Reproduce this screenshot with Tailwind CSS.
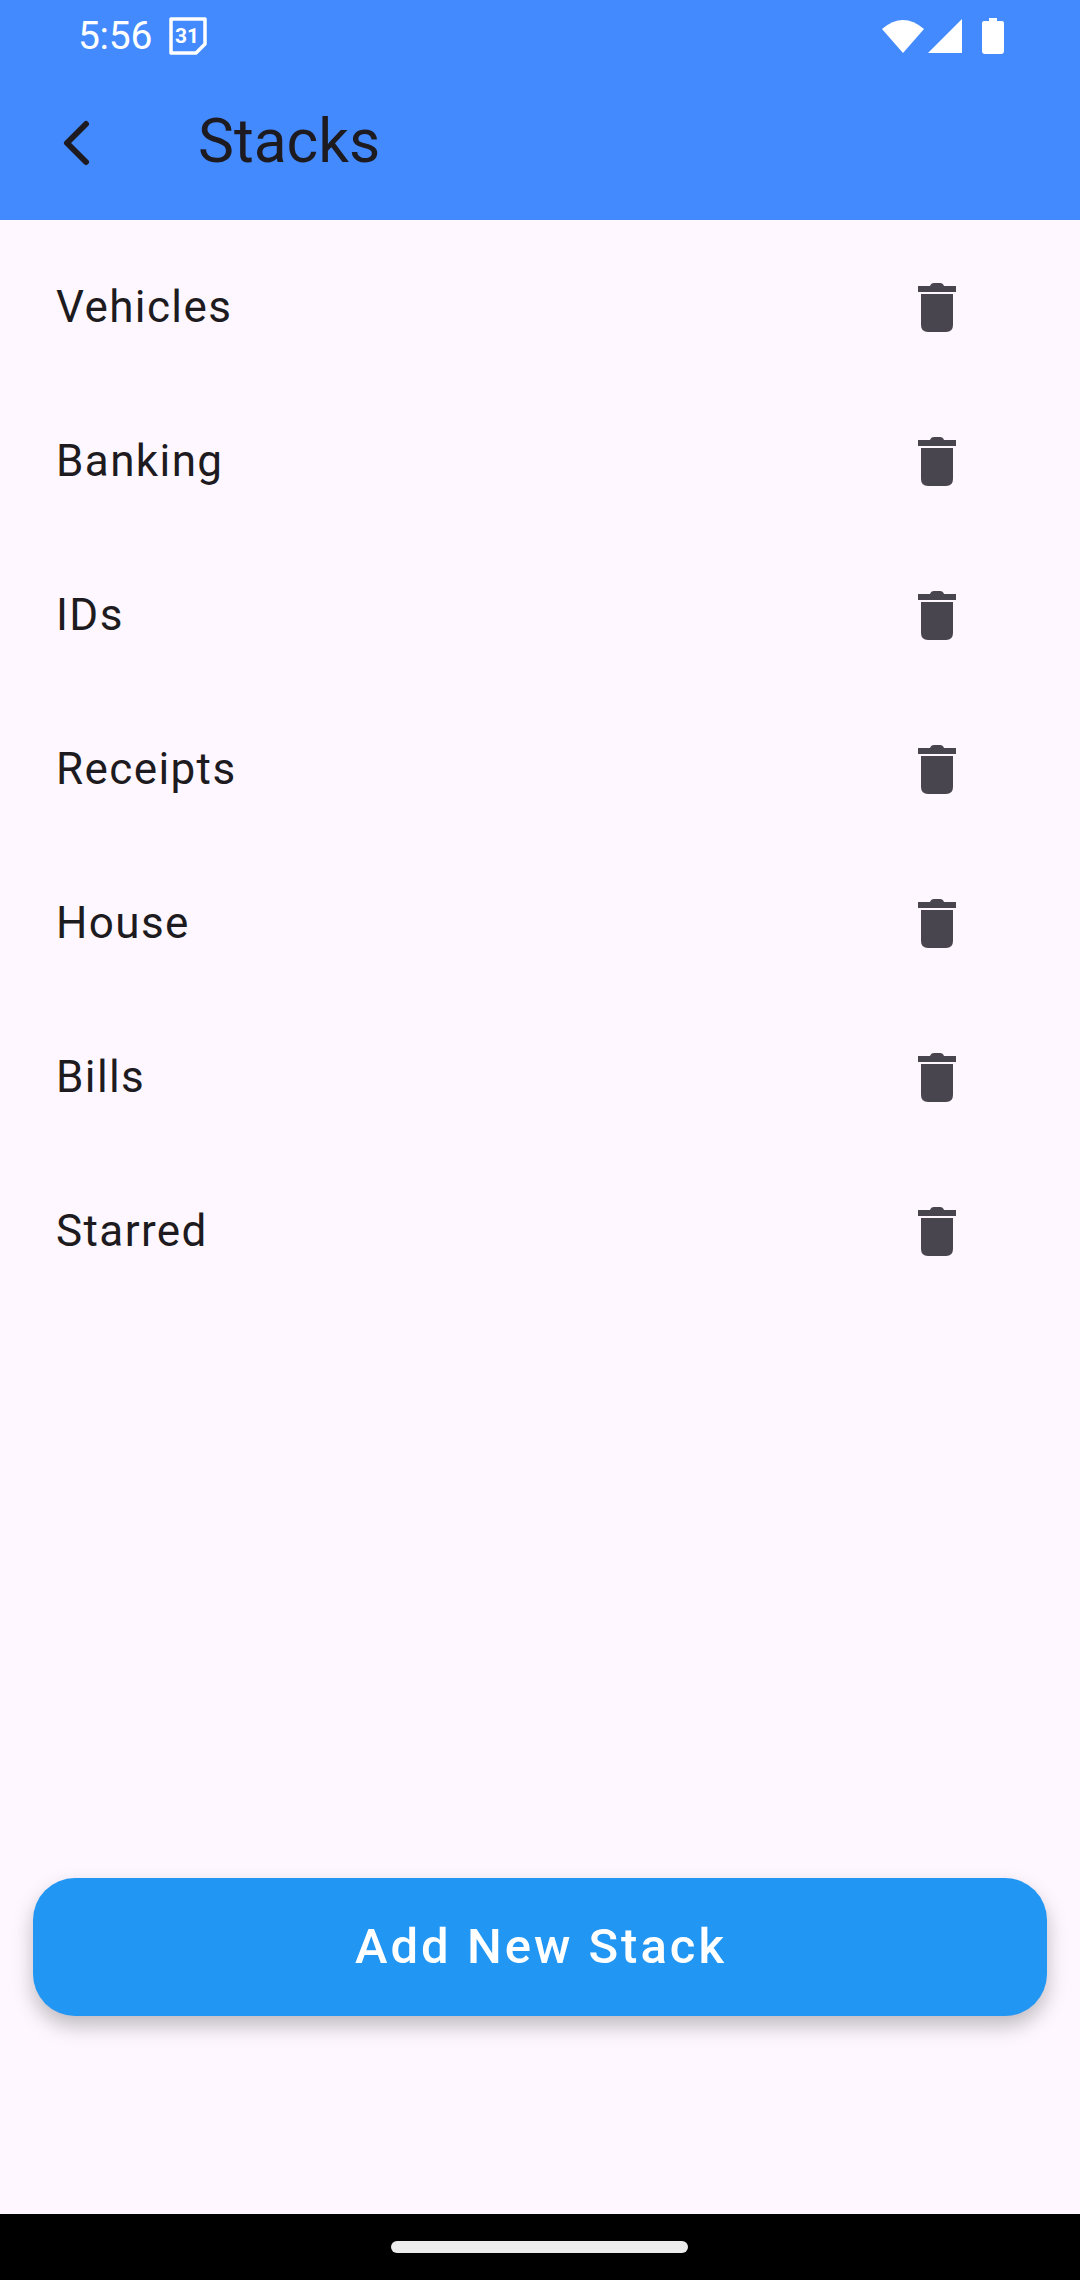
<!DOCTYPE html>
<html lang="en">
<head>
  <meta charset="UTF-8" />
  <title>Stacks</title>
  <script src="https://cdn.jsdelivr.net/npm/@tailwindcss/browser@4"></script>
</head>
<body class="bg-[#fef7ff] font-['Roboto',sans-serif]">
  <div class="w-[1080px] h-[2280px] flex flex-col overflow-hidden">

    <!-- status bar + app bar -->
    <header class="h-[220px] shrink-0 bg-[#448aff] flex flex-col">
      <div class="h-[72px] flex items-center justify-between pl-[78px] pr-[76px] text-white">
        <div class="flex items-center gap-[17px]">
          <span class="text-[39px] leading-none tracking-[-0.3px]">5:56</span>
          <svg class="w-[38px] h-[38px]" viewBox="0 0 38 38">
            <path d="M2 2H36V27L27 36H2Z" fill="none" stroke="#fff" stroke-width="3.5" stroke-linejoin="round"/>
            <text x="18" y="26" text-anchor="middle" font-family="Roboto" font-weight="700" font-size="21" fill="#fff">31</text>
          </svg>
        </div>
        <div class="flex items-center gap-[20px]">
          <div class="flex items-end gap-[4px]">
            <svg class="w-[42px] h-[36px]" viewBox="0 0 42 36"><path d="M0 11Q21 -7 42 11L21 35Z" fill="#fff"/></svg>
            <svg class="w-[34px] h-[35px]" viewBox="0 0 34 35"><path d="M34 0V34H0Z" fill="#fff"/></svg>
          </div>
          <svg class="w-[22px] h-[36px]" viewBox="0 0 22 36"><path d="M7 0H15V3H20Q22 3 22 5V33Q22 36 19 36H3Q0 36 0 33V5Q0 3 2 3H7Z" fill="#fff"/></svg>
        </div>
      </div>
      <div class="flex-1 flex items-center pb-[8px] text-[#1d1b20]">
        <div class="w-[198px] pl-[62px] pt-[2px] shrink-0">
          <svg class="w-[28px] h-[46px] block" viewBox="0 0 28 46"><path d="M24 4L5 23L24 42" fill="none" stroke="#1d1b20" stroke-width="6" stroke-linecap="round" stroke-linejoin="round"/></svg>
        </div>
        <h1 class="text-[60.5px] leading-none font-normal">Stacks</h1>
      </div>
    </header>

    <!-- stack list -->
    <main class="flex-1 relative">
      <ul class="pt-[9px] text-[#1d1b20]">
        <li class="h-[154px] flex items-center justify-between pl-[56px] pr-[124px]">
          <span class="text-[44px] tracking-[1.4px] mt-[1px]">Vehicles</span>
          <svg class="w-[38px] h-[49px] mt-[3px] text-[#49454f]" viewBox="0 0 38 49"><path fill="currentColor" d="M12 3Q13 0 16 0H22Q25 0 26 3H38V9H0V3ZM3 11H35V42Q35 49 28 49H10Q3 49 3 42Z"/></svg>
        </li>
        <li class="h-[154px] flex items-center justify-between pl-[56px] pr-[124px]">
          <span class="text-[44px] tracking-[1.4px] mt-[1px]">Banking</span>
          <svg class="w-[38px] h-[49px] mt-[3px] text-[#49454f]" viewBox="0 0 38 49"><path fill="currentColor" d="M12 3Q13 0 16 0H22Q25 0 26 3H38V9H0V3ZM3 11H35V42Q35 49 28 49H10Q3 49 3 42Z"/></svg>
        </li>
        <li class="h-[154px] flex items-center justify-between pl-[56px] pr-[124px]">
          <span class="text-[44px] tracking-[1.4px] mt-[1px]">IDs</span>
          <svg class="w-[38px] h-[49px] mt-[3px] text-[#49454f]" viewBox="0 0 38 49"><path fill="currentColor" d="M12 3Q13 0 16 0H22Q25 0 26 3H38V9H0V3ZM3 11H35V42Q35 49 28 49H10Q3 49 3 42Z"/></svg>
        </li>
        <li class="h-[154px] flex items-center justify-between pl-[56px] pr-[124px]">
          <span class="text-[44px] tracking-[1.4px] mt-[1px]">Receipts</span>
          <svg class="w-[38px] h-[49px] mt-[3px] text-[#49454f]" viewBox="0 0 38 49"><path fill="currentColor" d="M12 3Q13 0 16 0H22Q25 0 26 3H38V9H0V3ZM3 11H35V42Q35 49 28 49H10Q3 49 3 42Z"/></svg>
        </li>
        <li class="h-[154px] flex items-center justify-between pl-[56px] pr-[124px]">
          <span class="text-[44px] tracking-[1.4px] mt-[1px]">House</span>
          <svg class="w-[38px] h-[49px] mt-[3px] text-[#49454f]" viewBox="0 0 38 49"><path fill="currentColor" d="M12 3Q13 0 16 0H22Q25 0 26 3H38V9H0V3ZM3 11H35V42Q35 49 28 49H10Q3 49 3 42Z"/></svg>
        </li>
        <li class="h-[154px] flex items-center justify-between pl-[56px] pr-[124px]">
          <span class="text-[44px] tracking-[1.4px] mt-[1px]">Bills</span>
          <svg class="w-[38px] h-[49px] mt-[3px] text-[#49454f]" viewBox="0 0 38 49"><path fill="currentColor" d="M12 3Q13 0 16 0H22Q25 0 26 3H38V9H0V3ZM3 11H35V42Q35 49 28 49H10Q3 49 3 42Z"/></svg>
        </li>
        <li class="h-[154px] flex items-center justify-between pl-[56px] pr-[124px]">
          <span class="text-[44px] tracking-[1.4px] mt-[1px]">Starred</span>
          <svg class="w-[38px] h-[49px] mt-[3px] text-[#49454f]" viewBox="0 0 38 49"><path fill="currentColor" d="M12 3Q13 0 16 0H22Q25 0 26 3H38V9H0V3ZM3 11H35V42Q35 49 28 49H10Q3 49 3 42Z"/></svg>
        </li>
      </ul>
      <div class="absolute left-[33px] right-[33px] top-[1658px] h-[138px] rounded-[42px] bg-[#2196f3] shadow-[0_10px_20px_rgba(0,0,0,0.25)] flex items-center justify-center pl-[2px] text-white text-[49px] font-medium tracking-[3px]">Add New Stack</div>
    </main>

    <!-- nav bar -->
    <footer class="h-[66px] shrink-0 bg-black flex items-center justify-center">
      <div class="w-[297px] h-[12px] mr-[2px] rounded-full bg-[#ececec]"></div>
    </footer>
  </div>
</body>
</html>
